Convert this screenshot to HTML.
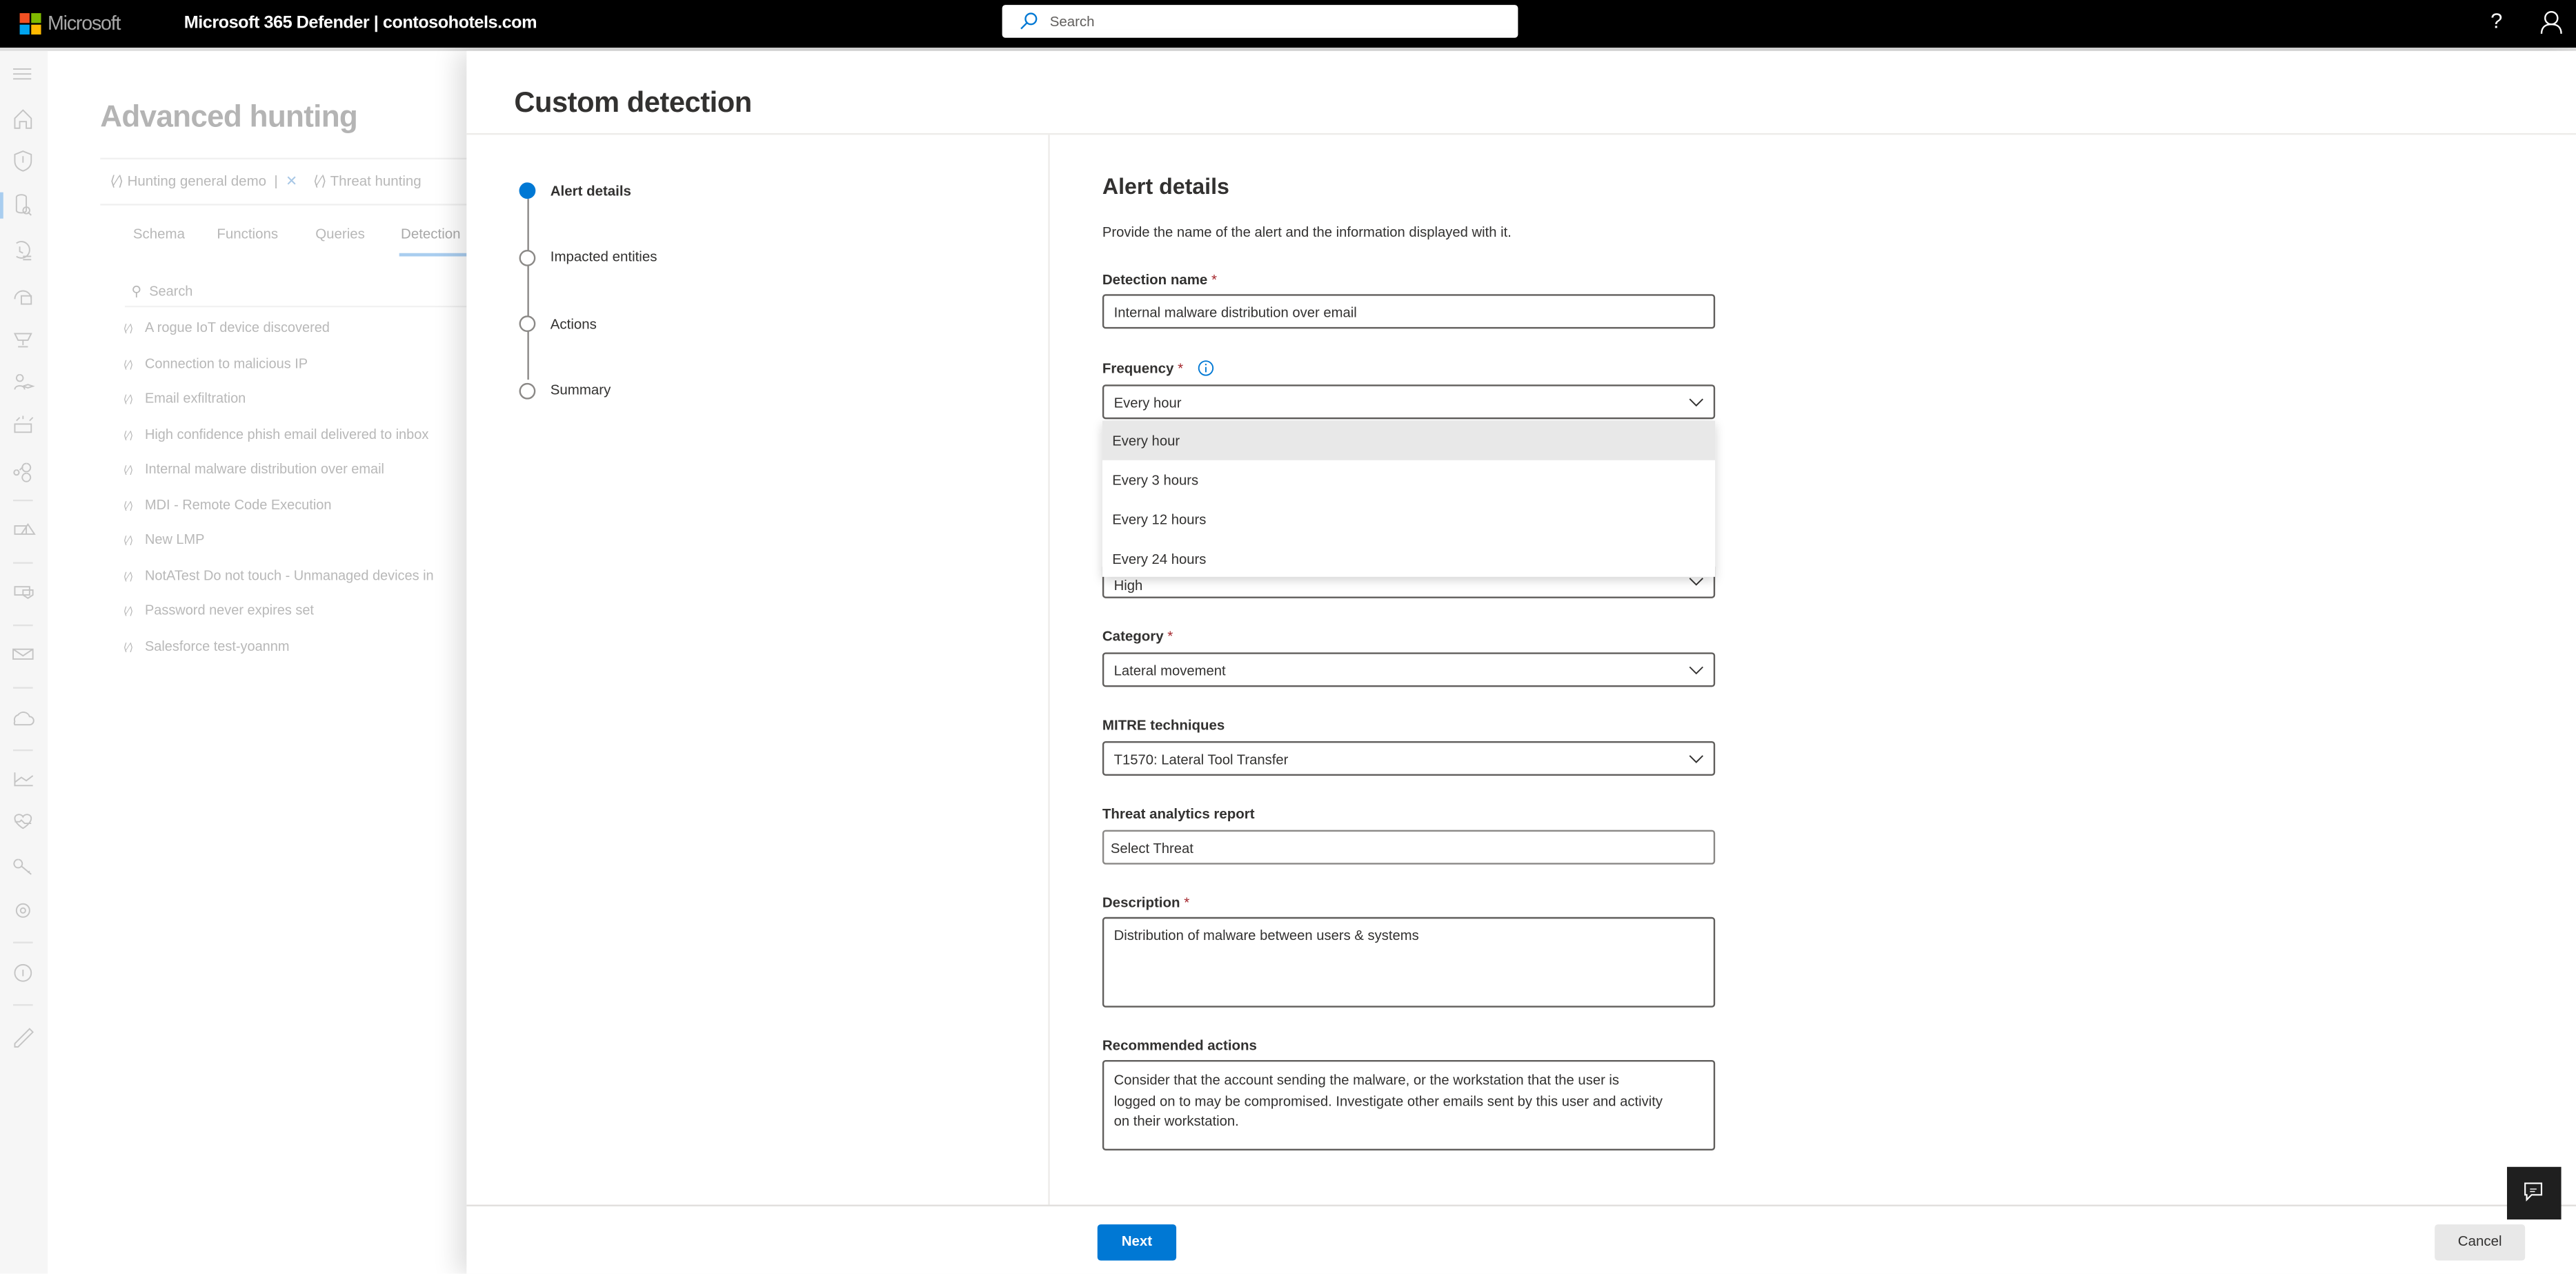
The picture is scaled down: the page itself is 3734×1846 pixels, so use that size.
<!DOCTYPE html>
<html><head><meta charset="utf-8">
<style>
html,body{margin:0;padding:0;width:3734px;height:1846px;overflow:hidden;background:#fff}
#s{position:absolute;left:0;top:0;width:1568px;height:775.2px;transform:scale(2.38138);transform-origin:0 0;font-family:"Liberation Sans",sans-serif;overflow:hidden;background:#fff}
.a{position:absolute;white-space:nowrap}
.bg{color:#b8b8b8;font-size:8.4px}
.li{position:absolute;left:75px;color:#b8b8b8;font-size:8.4px;white-space:nowrap}
.li i{font-style:normal;font-size:6.5px;margin-right:7px}
.lbl{position:absolute;left:671px;font-size:8.6px;font-weight:bold;color:#323130}
.req{color:#a4262c;font-weight:normal}
.inp{position:absolute;left:671px;width:373px;border:1px solid #605e5c;border-radius:2px;background:#fff;font-size:8.5px;color:#323130;box-sizing:border-box}
.inp span{position:absolute;left:6px;top:50%;transform:translateY(-50%)}
.chev{position:absolute;right:6px;top:50%;margin-top:-3px}
.item{position:absolute;left:671px;width:373px;height:24px;font-size:8.5px;color:#323130}
.item span{position:absolute;left:6px;top:7px}
.sep{position:absolute;left:8px;width:12px;height:1px;background:#e2e2e2}
.step{position:absolute;left:316px;width:10px;height:10px;border:1.2px solid #8a8886;border-radius:50%;box-sizing:border-box;background:#fff}
.sl{position:absolute;left:335px;font-size:8.6px;color:#323130}
</style></head><body><div id="s">
<div class="a" style="left:0;top:0;width:1568px;height:29px;background:#000"></div>
<div class="a" style="left:12px;top:8px;width:6px;height:6px;background:#f25022"></div>
<div class="a" style="left:19px;top:8px;width:6px;height:6px;background:#7fba00"></div>
<div class="a" style="left:12px;top:15px;width:6px;height:6px;background:#00a4ef"></div>
<div class="a" style="left:19px;top:15px;width:6px;height:6px;background:#ffb900"></div>
<div class="a" style="left:29px;top:7px;font-size:12px;color:#a8a8a8;letter-spacing:-0.5px">Microsoft</div>
<div class="a" style="left:112px;top:8px;font-size:10.6px;color:#fff;font-weight:bold;letter-spacing:-0.2px">Microsoft 365 Defender | contosohotels.com</div>
<div class="a" style="left:610px;top:3px;width:314px;height:20px;background:#fff;border-radius:2px"></div>
<svg class="a" style="left:620px;top:7px" width="12" height="12" viewBox="0 0 12 12"><circle cx="7.5" cy="4.5" r="3.3" fill="none" stroke="#0078d4" stroke-width="1"/><line x1="5" y1="7" x2="1.5" y2="10.5" stroke="#0078d4" stroke-width="1"/></svg>
<div class="a" style="left:639px;top:8px;font-size:8.6px;color:#605e5c">Search</div>
<div class="a" style="left:1516px;top:5px;font-size:13px;color:#fff">?</div>
<svg class="a" style="left:1546px;top:6px" width="14" height="15" viewBox="0 0 14 15"><circle cx="7" cy="5" r="3.8" fill="none" stroke="#fff" stroke-width="1"/><path d="M1 14.5 C1 10.5 3.5 8.8 7 8.8 C10.5 8.8 13 10.5 13 14.5" fill="none" stroke="#fff" stroke-width="1"/></svg>
<div class="a" style="left:0;top:29px;width:1568px;height:2px;background:#dcdcdc"></div>
<div class="a" style="left:0;top:31px;width:29px;height:745px;background:#f6f6f6"></div>
<div class="a" style="left:0;top:117px;width:2px;height:16px;background:#a9cdef"></div>
<svg class="a" style="left:0;top:31px" width="29" height="745" viewBox="0 31 29 745" fill="none" stroke="#c4c4c4" stroke-width="0.8">
<path d="M8 42h11M8 45h11M8 48h11"/>
<path d="M9 72l5-5 5 5v6h-3v-4h-4v4h-3z"/>
<path d="M14 92l5 2v4c0 3-2 5-5 6-3-1-5-3-5-6v-4z M14 95v4"/>
<path d="M10 120c0-2 6-2 6 0v8c0 2-6 2-6 0z M16 126a2 2 0 1 0 .1 0 M17 129l2 2"/>
<path d="M10 148a5 5 0 1 1 0 8 M12 150v3l2 1 M14 158h5M14 156h5"/>
<path d="M9 182a5 5 0 0 1 10 0 M13 180h6v5h-6z"/>
<path d="M9 203h10l-2 4h-6z M14 207v3 M11 211h6"/>
<path d="M12 228a2 2 0 1 0 .1 0 M9 237c0-3 6-3 6 0 M14 235l3-1 3 1-3 1z"/>
<path d="M9 258h10v5h-10z M10 256l2-2 M14 255v-2 M18 256l2-2"/>
<path d="M10 286a1.5 1.5 0 1 0 .1 0 M16 282a2.5 2.5 0 1 0 .1 0 M16 288a2.5 2.5 0 1 0 .1 0 M12 286l2-2"/>
<path d="M9 320h7v5h-7z M13 325l4-6 4 6z"/>
<path d="M9 357h9v5h-9z M14 362l3 2 3-2v-3h-6z"/>
<path d="M8 395h12v6h-12z M8 395l6 4 6-4"/>
<path d="M9 439a3 3 0 0 1 2-4 4 4 0 0 1 7 1 2.5 2.5 0 0 1 0 5h-9a2 2 0 0 1 0-2z"/>
<path d="M9 470v8h11 M9 476l4-3 3 2 4-3"/>
<path d="M9 498c0-3 4-3 5-1 1-2 5-2 5 1 0 3-5 6-5 6s-5-3-5-6z M9 500h3l1-1 2 2h4"/>
<path d="M11 523a2.5 2.5 0 1 0 .1 0 M13 527l6 5 M17 531l1-1"/>
<circle cx="14" cy="554" r="4"/><circle cx="14" cy="554" r="1.5"/>
<circle cx="14" cy="592" r="5"/><path d="M14 590v4"/>
<path d="M9 635l9-9 2 2-9 9h-2z"/>
</svg>
<div class="sep" style="top:304px"></div><div class="sep" style="top:342px"></div><div class="sep" style="top:380px"></div><div class="sep" style="top:418px"></div><div class="sep" style="top:456px"></div><div class="sep" style="top:573px"></div><div class="sep" style="top:611px"></div>
<div class="a" style="left:61px;top:60px;font-size:18.5px;font-weight:bold;color:#b4b4b4;letter-spacing:-0.3px">Advanced hunting</div>
<div class="a" style="left:61px;top:96px;width:223px;height:1px;background:#f0f0f0"></div>
<div class="a bg" style="left:67px;top:105px;font-size:8.6px">⟨∕⟩ Hunting general demo &nbsp;|&nbsp; <span style="color:#a9c8e6">✕</span> &nbsp;&nbsp; ⟨∕⟩ Threat hunting</div>
<div class="a" style="left:61px;top:124px;width:223px;height:1px;background:#f0f0f0"></div>
<div class="a bg" style="left:81px;top:137px;font-size:8.6px">Schema</div>
<div class="a bg" style="left:132px;top:137px;font-size:8.6px">Functions</div>
<div class="a bg" style="left:192px;top:137px;font-size:8.6px">Queries</div>
<div class="a bg" style="left:244px;top:137px;font-size:8.6px;color:#a8a8a8">Detection</div>
<div class="a" style="left:243px;top:154px;width:41px;height:2px;background:#a9cdef"></div>
<div class="a bg" style="left:80px;top:172px">⚲ &nbsp;Search</div>
<div class="a" style="left:76px;top:186px;width:208px;height:1px;background:#f2f2f2"></div>
<div class="li" style="top:194px"><i>⟨∕⟩</i>A rogue IoT device discovered</div>
<div class="li" style="top:215.5px"><i>⟨∕⟩</i>Connection to malicious IP</div>
<div class="li" style="top:237px"><i>⟨∕⟩</i>Email exfiltration</div>
<div class="li" style="top:258.5px"><i>⟨∕⟩</i>High confidence phish email delivered to inbox</div>
<div class="li" style="top:280px"><i>⟨∕⟩</i>Internal malware distribution over email</div>
<div class="li" style="top:301.5px"><i>⟨∕⟩</i>MDI - Remote Code Execution</div>
<div class="li" style="top:323px"><i>⟨∕⟩</i>New LMP</div>
<div class="li" style="top:344.5px"><i>⟨∕⟩</i>NotATest Do not touch - Unmanaged devices in</div>
<div class="li" style="top:366px"><i>⟨∕⟩</i>Password never expires set</div>
<div class="li" style="top:387.5px"><i>⟨∕⟩</i>Salesforce test-yoannm</div>
<div class="a" style="left:284px;top:31px;width:1284px;height:745px;background:#fff;box-shadow:-6px 0 14px rgba(0,0,0,0.13)"></div>
<div class="a" style="left:313px;top:52px;font-size:17.5px;font-weight:bold;color:#323130;letter-spacing:-0.2px">Custom detection</div>
<div class="a" style="left:284px;top:81px;width:1284px;height:1px;background:#edebe9"></div>
<div class="a" style="left:638px;top:82px;width:1px;height:651px;background:#edebe9"></div>
<div class="a" style="left:284px;top:733px;width:1284px;height:1px;background:#e1dfdd"></div>
<div class="a" style="left:321px;top:121px;width:1px;height:110px;background:#8a8886"></div>
<div class="step" style="top:111px;background:#0078d4;border-color:#0078d4"></div>
<div class="step" style="top:151.5px"></div>
<div class="step" style="top:192px"></div>
<div class="step" style="top:232.5px"></div>
<div class="sl" style="top:111px;font-weight:bold">Alert details</div>
<div class="sl" style="top:151px">Impacted entities</div>
<div class="sl" style="top:192px">Actions</div>
<div class="sl" style="top:232px">Summary</div>
<div class="a" style="left:671px;top:106px;font-size:13.5px;font-weight:bold;color:#323130">Alert details</div>
<div class="a" style="left:671px;top:136px;font-size:8.5px;color:#323130">Provide the name of the alert and the information displayed with it.</div>
<div class="lbl" style="top:165px">Detection name <span class="req">*</span></div>
<div class="inp" style="top:179px;height:21px"><span>Internal malware distribution over email</span></div>
<div class="lbl" style="top:219px">Frequency <span class="req">*</span></div>
<svg class="a" style="left:729px;top:219px" width="10" height="10" viewBox="0 0 10 10"><circle cx="5" cy="5" r="4.3" fill="none" stroke="#0078d4" stroke-width="0.8"/><path d="M5 4.3v3.2" stroke="#0078d4" stroke-width="0.8"/><circle cx="5" cy="2.8" r="0.5" fill="#0078d4"/></svg>
<div class="inp" style="top:234px;height:21px"><span>Every hour</span><svg class="chev" width="9" height="6" viewBox="0 0 9 6"><polyline points="0.5,0.8 4.5,4.8 8.5,0.8" fill="none" stroke="#323130" stroke-width="0.8"/></svg></div>
<div class="inp" style="top:343px;height:21px"><span style="top:62%">High</span><svg class="chev" width="9" height="6" viewBox="0 0 9 6"><polyline points="0.5,0.8 4.5,4.8 8.5,0.8" fill="none" stroke="#323130" stroke-width="0.8"/></svg></div>
<div class="a" style="left:671px;top:256px;width:373px;height:95px;background:#fff;box-shadow:0 2px 6px rgba(0,0,0,0.18)"></div>
<div class="item" style="top:256px;background:#e8e8e8"><span>Every hour</span></div>
<div class="item" style="top:280px"><span>Every 3 hours</span></div>
<div class="item" style="top:304px"><span>Every 12 hours</span></div>
<div class="item" style="top:328px"><span>Every 24 hours</span></div>
<div class="lbl" style="top:382px">Category <span class="req">*</span></div>
<div class="inp" style="top:397px;height:21px"><span>Lateral movement</span><svg class="chev" width="9" height="6" viewBox="0 0 9 6"><polyline points="0.5,0.8 4.5,4.8 8.5,0.8" fill="none" stroke="#323130" stroke-width="0.8"/></svg></div>
<div class="lbl" style="top:436px">MITRE techniques</div>
<div class="inp" style="top:451px;height:21px"><span>T1570: Lateral Tool Transfer</span><svg class="chev" width="9" height="6" viewBox="0 0 9 6"><polyline points="0.5,0.8 4.5,4.8 8.5,0.8" fill="none" stroke="#323130" stroke-width="0.8"/></svg></div>
<div class="lbl" style="top:490px">Threat analytics report</div>
<div class="inp" style="top:505px;height:21px;border-color:#8a8886"><span style="left:4px">Select Threat</span></div>
<div class="lbl" style="top:544px">Description <span class="req">*</span></div>
<div class="inp" style="top:558px;height:55px"><span style="top:5px;transform:none">Distribution of malware between users &amp; systems</span></div>
<div class="lbl" style="top:631px">Recommended actions</div>
<div class="inp" style="top:645px;height:55px"><span style="top:5px;transform:none;white-space:normal;width:335px;line-height:12.5px">Consider that the account sending the malware, or the workstation that the user is logged on to may be compromised. Investigate other emails sent by this user and activity on their workstation.</span></div>
<div class="a" style="left:668px;top:745px;width:48px;height:21.5px;background:#0078d4;border-radius:2px;color:#fff;font-size:8.6px;font-weight:bold;text-align:center;line-height:21.5px">Next</div>
<div class="a" style="left:1482px;top:745px;width:55px;height:21.5px;background:#e8e8e8;border-radius:2px;color:#323130;font-size:8.6px;text-align:center;line-height:21.5px">Cancel</div>
<div class="a" style="left:1526px;top:710px;width:33px;height:32px;background:#1f1f1f"></div>
<svg class="a" style="left:1536px;top:719px" width="12" height="12" viewBox="0 0 12 12"><path d="M1 1h10v7h-6l-3 3v-3h-1z" fill="none" stroke="#fff" stroke-width="0.9"/><path d="M4 4.5h4M4 6h3" stroke="#fff" stroke-width="0.6"/></svg>
</div></body></html>
